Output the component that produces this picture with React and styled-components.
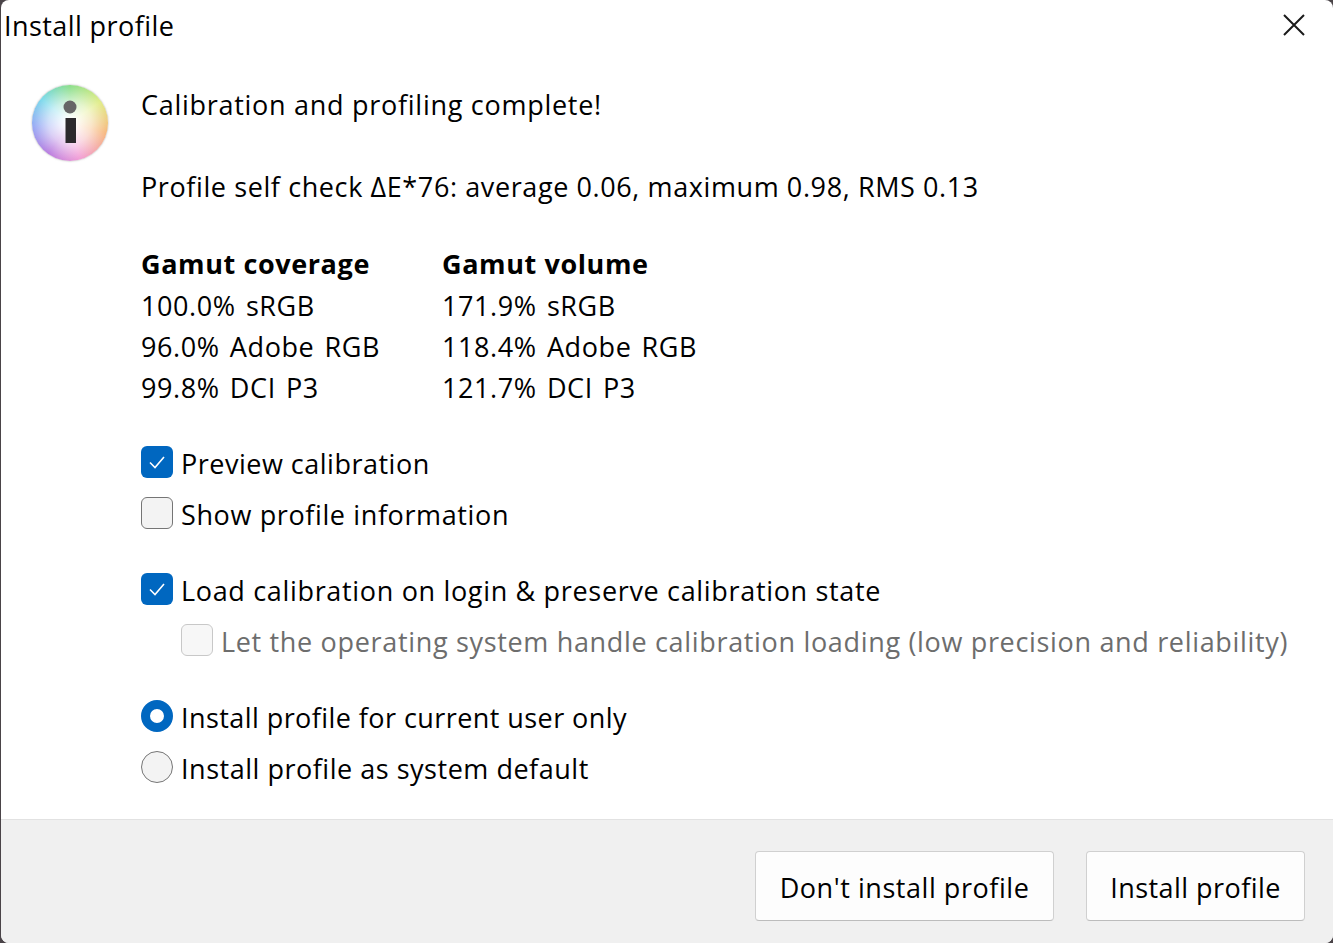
import React from "react";
import styled, { createGlobalStyle } from "styled-components";

const Global = createGlobalStyle`
  html, body { margin: 0; padding: 0; background: #4a4448; }
  body { font-family: "Open Sans", "Noto Sans", sans-serif; color: #000; }
`;

const Win = styled.div`
  width: 1332px;
  height: 943px;
  margin-left: 1px;
  background: #fff;
  border-radius: 8px;
  display: flex;
  flex-direction: column;
  overflow: hidden;
`;

const TitleBar = styled.div`
  height: 52px;
  display: flex;
  align-items: center;
  justify-content: space-between;
  padding: 0 28px 2px 3px;
  box-sizing: border-box;
  font-size: 27px;
  letter-spacing: 0.42px;
`;

const CloseIcon = styled.svg`
  width: 22px;
  height: 22px;
  stroke: #1a1a1a;
  stroke-width: 2;
  fill: none;
`;

const Body = styled.div`
  flex: 1;
  display: flex;
  padding: 33px 0 0 31px;
`;

const Orb = styled.div`
  position: relative;
  flex: none;
  width: 76px;
  height: 76px;
  margin-right: 33px;
  border-radius: 50%;
  box-shadow: 0 0 2px rgba(120, 120, 120, 0.7);
  background:
    radial-gradient(circle at 50% 50%, rgba(120,120,120,0) 76%, rgba(90,90,90,.6) 100%),
    radial-gradient(circle at 50% 50%, #fff 6%, rgba(255,255,255,.66) 40%, rgba(255,255,255,0) 82%),
    conic-gradient(#6fd66f 0deg, #d9e86a 55deg, #f5a860 105deg, #ee86cc 165deg, #a95fd8 215deg, #7d95f2 265deg, #5cd0e6 310deg, #6fd66f 360deg);
`;

const InfoGlyph = styled.svg`
  position: absolute;
  inset: 0;
  width: 100%;
  height: 100%;
`;

const Content = styled.div`
  display: flex;
  flex-direction: column;
  margin-top: -1px;
  font-size: 27px;
  letter-spacing: 0.6px;
`;

const Line = styled.div`
  height: 41px;
  line-height: 41px;
  white-space: nowrap;
  margin-top: ${(p) => p.$top || 0}px;
  letter-spacing: ${(p) => p.$ls || 0.6}px;
`;

const Stats = styled.div`
  display: flex;
  margin-top: 36px;
`;

const StatCol = styled.div`
  width: ${(p) => p.$w}px;
`;

const Heading = styled(Line)`
  font-weight: 700;
`;

const Value = styled(Line)`
  position: relative;
  top: 1px;
  word-spacing: 2.5px;
`;

const Option = styled.div`
  display: flex;
  align-items: center;
  gap: 8px;
  height: 41px;
  line-height: 45px;
  white-space: nowrap;
  margin-top: ${(p) => p.$top}px;
  margin-left: ${(p) => p.$indent || 0}px;
  letter-spacing: ${(p) => p.$ls}px;
  color: ${(p) => (p.$dim ? "#6d6d6d" : "#000")};
`;

const Box = styled.span`
  flex: none;
  box-sizing: border-box;
  width: 32px;
  height: 32px;
  margin-top: -3px;
  border-radius: 6px;
  display: flex;
  align-items: center;
  justify-content: center;
  background: ${(p) => (p.$on ? "#0067c0" : p.$dim ? "#f7f7f7" : "#f3f3f3")};
  border: ${(p) => (p.$on ? "none" : p.$dim ? "1.5px solid #c8c8c8" : "1.5px solid #757575")};
`;

const Radio = styled.span`
  flex: none;
  box-sizing: border-box;
  width: 32px;
  height: 32px;
  margin-top: -3px;
  border-radius: 50%;
  background: ${(p) => (p.$on ? "#fff" : "#f3f3f3")};
  border: ${(p) => (p.$on ? "9.5px solid #0067c0" : "1.5px solid #757575")};
`;

const Footer = styled.div`
  flex: none;
  height: 124px;
  box-sizing: border-box;
  background: #f0f0f0;
  border-top: 1px solid #e2e2e2;
  display: flex;
  justify-content: flex-end;
  gap: 32px;
  padding: 31px 28px 0 0;
`;

const Button = styled.button`
  height: 70px;
  width: ${(p) => p.$w}px;
  background: #fdfdfd;
  border: 1px solid #d0d0d0;
  border-bottom-color: #bcbcbc;
  border-radius: 4px;
  font: inherit;
  font-size: 27px;
  letter-spacing: ${(p) => p.$ls}px;
  color: #000;
  padding: 2px 0 0;
`;

const Check = () => (
  <svg width="18" height="18" viewBox="0 0 18 18" fill="none" stroke="#fff" strokeWidth="1.6">
    <path d="M2 9.5 L7 14.5 L16 4" />
  </svg>
);

export default function App() {
  return (
    <>
      <Global />
      <Win>
        <TitleBar>
          <span>Install profile</span>
          <CloseIcon viewBox="0 0 22 22">
            <path d="M1 1 L21 21 M21 1 L1 21" />
          </CloseIcon>
        </TitleBar>
        <Body>
          <Orb>
            <InfoGlyph viewBox="0 0 76 76">
              <circle cx="38" cy="22" r="6.5" fill="#666" />
              <rect x="33.5" y="33" width="10.5" height="25" fill="#2c2a2c" />
            </InfoGlyph>
          </Orb>
          <Content>
            <Line $ls={0.72}>Calibration and profiling complete!</Line>
            <Line $top={41}>Profile self check ΔE*76: average 0.06, maximum 0.98, RMS 0.13</Line>
            <Stats>
              <StatCol $w={301}>
                <Heading>Gamut coverage</Heading>
                <Value>100.0% sRGB</Value>
                <Value>96.0% Adobe RGB</Value>
                <Value>99.8% DCI P3</Value>
              </StatCol>
              <StatCol $w={400}>
                <Heading>Gamut volume</Heading>
                <Value>171.9% sRGB</Value>
                <Value>118.4% Adobe RGB</Value>
                <Value>121.7% DCI P3</Value>
              </StatCol>
            </Stats>
            <Option $top={36} $ls={0.5}>
              <Box $on><Check /></Box>
              Preview calibration
            </Option>
            <Option $top={10} $ls={0.62}>
              <Box />
              Show profile information
            </Option>
            <Option $top={35} $ls={0.67}>
              <Box $on><Check /></Box>
              Load calibration on login &amp; preserve calibration state
            </Option>
            <Option $top={10} $indent={40} $dim $ls={0.67}>
              <Box $dim />
              Let the operating system handle calibration loading (low precision and reliability)
            </Option>
            <Option $top={35} $ls={0.43}>
              <Radio $on />
              Install profile for current user only
            </Option>
            <Option $top={10} $ls={0.52}>
              <Radio />
              Install profile as system default
            </Option>
          </Content>
        </Body>
        <Footer>
          <Button $w={299} $ls={0.55}>Don't install profile</Button>
          <Button $w={219} $ls={0.45}>Install profile</Button>
        </Footer>
      </Win>
    </>
  );
}
